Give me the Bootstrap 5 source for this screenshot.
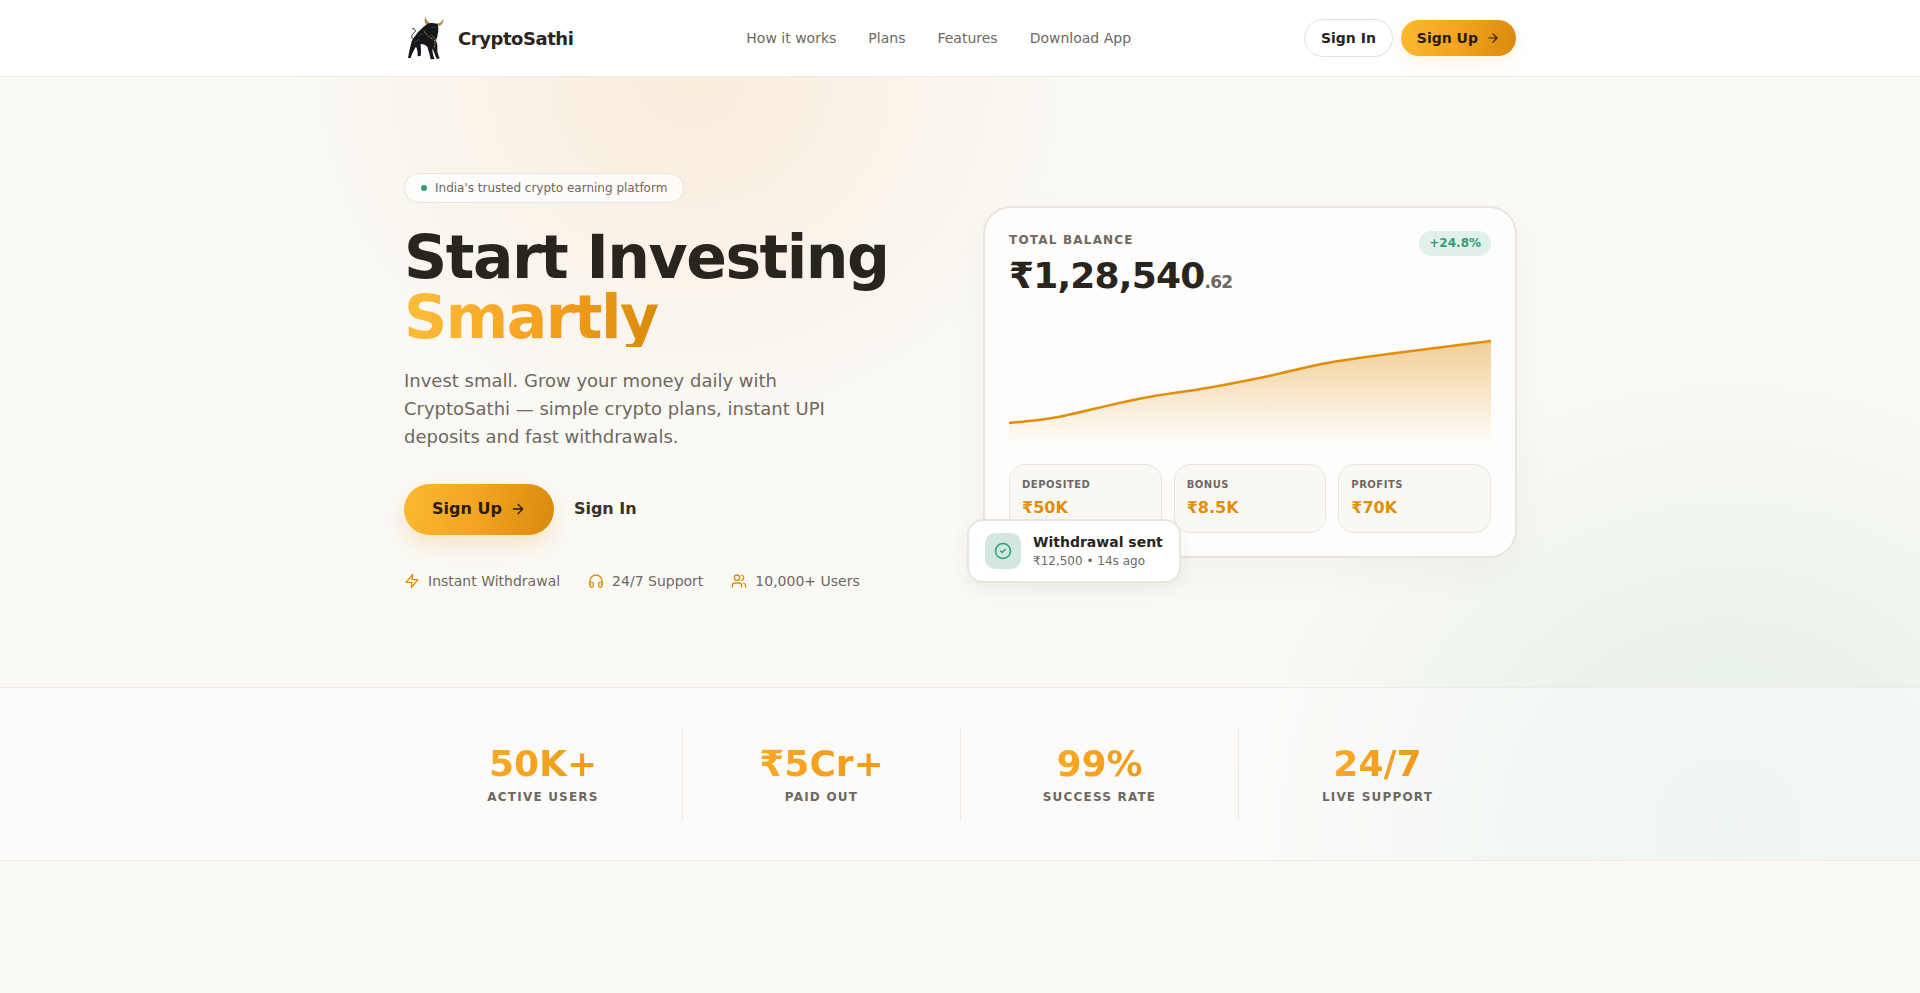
<!DOCTYPE html>
<html lang="en">
<head>
  <meta charset="UTF-8">
  <title>CryptoSathi</title>
  <link rel="stylesheet" href="https://cdn.jsdelivr.net/npm/bootstrap@5.3.0/dist/css/bootstrap.min.css">
  <style>
    body {
      font-family: "DejaVu Sans", sans-serif;
      color: #2a241e;
      min-height: 100vh;
      background-color: #faf9f5;
    }
    .wrap-main { width: 1112px; margin: 0 auto; }
    .top-bar { height: 77px; background: #fff; border-bottom: 1px solid #eeebe6; }
    .brand-link { gap: 10px; }
    .brand-name { font-size: 18px; font-weight: 700; letter-spacing: -.45px; color: #2a241e; }
    .top-links { gap: 32px; }
    .top-links a { font-size: 14px; color: #6e6860; text-decoration: none; }
    .btn-ghost {
      font-size: 14px; font-weight: 700; color: #2a241e; background: #fff;
      border: 1px solid #e4e1dc; border-radius: 50px; padding: 0 16px; height: 38px;
      display: inline-flex; align-items: center;
    }
    .btn-gold {
      font-size: 14px; font-weight: 700; color: #2a1c0a;
      background: linear-gradient(100deg, #fbb92f, #f2a322 50%, #d98a0a);
      border: 0; border-radius: 50px; padding: 0 16px; height: 36px;
      display: inline-flex; align-items: center; gap: 8px;
      box-shadow: 0 6px 16px rgba(245, 160, 32, .14);
    }
    .btn-gold.big { font-size: 16px; height: 51px; padding: 0 28px; box-shadow: 0 10px 22px rgba(245, 160, 32, .22); }
    .btn-plain { font-size: 16px; font-weight: 700; color: #38322c; background: none; border: 0; padding: 0 20px; }
    .page-glow {
      background-image:
        radial-gradient(ellipse 400px 370px at 690px 0, rgba(240, 170, 90, .17), rgba(240, 170, 90, .07) 55%, rgba(240, 170, 90, 0) 100%),
        radial-gradient(ellipse 500px 470px at 1728px 750px, rgba(47, 158, 120, .12), rgba(47, 158, 120, .06) 55%, rgba(47, 158, 120, 0) 100%);
      background-repeat: no-repeat;
    }
    .hero-grid { display: grid; grid-template-columns: 532px 534px; gap: 47px; align-items: center; padding: 96px 0 95px; }
    .trust-pill {
      display: inline-flex; align-items: center; gap: 8px; height: 30px; padding: 0 16px;
      font-size: 12px; color: #6e6860; background: rgba(255,255,255,.75);
      border: 1px solid #e9e6e0; border-radius: 50px;
    }
    .green-dot { width: 6px; height: 6px; border-radius: 50%; background: #2f9e78; }
    .hero-title { font-size: 60px; font-weight: 700; line-height: 60px; letter-spacing: -1.5px; margin: 23.5px 0 20px; color: #2a241e; }
    .gold-text {
      background: linear-gradient(100deg, #fdbf3a, #f5a020 55%, #d98a0a);
      -webkit-background-clip: text; background-clip: text; color: transparent;
      display: inline-block;
    }
    .hero-sub { font-size: 18px; line-height: 28px; color: #6e6860; max-width: 480px; margin-bottom: 33px; }
    .perk-row { gap: 28px; margin-top: 36px; font-size: 14px; color: #6e6860; }
    .perk-row svg { color: #e08e0b; }
    .bal-card {
      position: relative; background: #fefdfb; border: 2px solid #e8e5df; border-radius: 28px;
      padding: 23px 24px 24px; height: 352px; box-shadow: 0 16px 40px rgba(60, 45, 20, .04);
    }
    .bal-label { font-size: 12px; font-weight: 700; letter-spacing: 1.2px; color: #6e6860; }
    .bal-amount { font-size: 36px; font-weight: 700; line-height: 44px; letter-spacing: -.8px; margin-top: 5px; }
    .bal-amount small { font-size: 17px; color: #6e6860; }
    .up-pill { font-size: 12px; font-weight: 700; color: #2f9e78; background: #e2f0ea; border-radius: 50px; padding: 4px 10px; height: 25px; line-height: 17px; }
    .area-chart { display: block; width: 100%; height: 125px; margin-top: 15px; }
    .mini-grid { display: grid; grid-template-columns: repeat(3, 1fr); gap: 12px; margin-top: 20px; }
    .mini-box { background: #faf8f5; border: 1px solid #e9e6e0; border-radius: 16px; padding: 12px; height: 69px; }
    .mini-label { font-size: 10px; font-weight: 700; letter-spacing: .5px; color: #6e6860; line-height: 16px; }
    .mini-val { font-size: 16px; font-weight: 700; color: #e08e0b; line-height: 24px; margin-top: 3px; }
    .toast-float {
      position: absolute; left: -18px; bottom: -27px; width: 214px; height: 64px;
      display: flex; align-items: center; gap: 12px; padding: 0 16px;
      background: #fff; border: 2px solid #e8e5df; border-radius: 16px;
      box-shadow: 0 8px 20px rgba(60, 45, 20, .06);
    }
    .toast-icon { width: 36px; height: 36px; border-radius: 10px; background: #d2e8df; display: flex; align-items: center; justify-content: center; flex: none; }
    .toast-title { font-size: 14px; font-weight: 700; line-height: 18px; white-space: nowrap; color: #2a241e; }
    .toast-sub { font-size: 12px; color: #6e6860; line-height: 18px; margin-top: 1px; white-space: nowrap; }
    .stat-band { background: rgba(255,255,255,.42); border-top: 1px solid #eeebe6; border-bottom: 1px solid #eeebe6; padding: 40px 0; height: 174px; }
    .stat-grid { display: grid; grid-template-columns: repeat(4, 1fr); }
    .stat-cell { text-align: center; height: 92px; padding-top: 16px; border-left: 1px solid #eeebe6; }
    .stat-cell:first-child { border-left: 0; }
    .stat-num {
      font-size: 36px; font-weight: 700; line-height: 40px;
      background: linear-gradient(100deg, #f9a825, #ef9a1a);
      -webkit-background-clip: text; background-clip: text; color: transparent; display: inline-block;
    }
    .stat-label { font-size: 12px; font-weight: 700; letter-spacing: 1.2px; color: #6e6860; line-height: 18px; margin-top: 4px; }
  </style>
</head>
<body>

  <!-- Navigation -->
  <header class="top-bar">
    <div class="wrap-main h-100 d-flex align-items-center justify-content-between">
      <a class="d-flex align-items-center text-decoration-none brand-link" href="#">
        <svg width="44" height="48" viewBox="42 42 132 144" aria-hidden="true">
          <path d="M110 74C104 70 102 60 106 50 108 58 112 64 120 68ZM138 70C146 72 154 68 160 57 162 68 154 78 142 78Z" fill="#b0853f"/>
          <path d="M76 112C70 118 62 116 66 106 70 98 80 96 74 88 72 85 68 85 66 87" fill="none" stroke="#1a1c22" stroke-width="3"/>
          <path d="M112 72C118 68 132 68 142 72 146 80 146 92 143 102 142 110 141 118 136 120 140 126 143 132 142 142 141 152 143 162 149 175L140 177C136 166 132 156 128 146L127 150C128 160 130 170 134 177L122 178C120 166 116 154 112 140 106 134 98 132 92 132 92 142 94 156 92 168L83 169C84 158 82 148 78 140 72 148 66 160 62 174L54 174C56 160 60 146 63 132 65 120 72 112 78 104 86 94 98 82 112 72Z" fill="#15171d"/>
          <path d="M84 108C90 102 96 100 100 104M72 130C76 122 84 118 90 120M124 84C128 80 134 80 138 84" fill="none" stroke="#454b57" stroke-width="2"/>
          <path d="M102 92C108 104 118 112 130 118M125 106L142 122M134 120C136 130 134 138 132 146" fill="none" stroke="#b8923f" stroke-width="3" stroke-dasharray="3 1.5"/>
        </svg>
        <span class="brand-name">CryptoSathi</span>
      </a>
      <nav class="d-flex top-links">
        <a href="#">How it works</a>
        <a href="#">Plans</a>
        <a href="#">Features</a>
        <a href="#">Download App</a>
      </nav>
      <div class="d-flex align-items-center gap-2">
        <button class="btn-ghost">Sign In</button>
        <button class="btn-gold">Sign Up
          <svg width="14" height="14" viewBox="0 0 24 24" fill="none" stroke="currentColor" stroke-width="2" stroke-linecap="round" stroke-linejoin="round"><path d="M5 12h14M12 5l7 7-7 7"/></svg>
        </button>
      </div>
    </div>
  </header>

  <main class="page-glow">
    <section class="wrap-main hero-grid">
      <div>
        <span class="trust-pill"><span class="green-dot"></span>India's trusted crypto earning platform</span>
        <h1 class="hero-title">Start Investing<br><span class="gold-text">Smartly</span></h1>
        <p class="hero-sub">Invest small. Grow your money daily with CryptoSathi — simple crypto plans, instant UPI deposits and fast withdrawals.</p>
        <div class="d-flex align-items-center">
          <button class="btn-gold big">Sign Up
            <svg width="16" height="16" viewBox="0 0 24 24" fill="none" stroke="currentColor" stroke-width="2" stroke-linecap="round" stroke-linejoin="round"><path d="M5 12h14M12 5l7 7-7 7"/></svg>
          </button>
          <button class="btn-plain">Sign In</button>
        </div>
        <div class="d-flex perk-row">
          <span class="d-flex align-items-center gap-2">
            <svg width="16" height="16" viewBox="0 0 24 24" fill="none" stroke="currentColor" stroke-width="2" stroke-linecap="round" stroke-linejoin="round"><path d="M13 2 3 14h9l-1 8 10-12h-9l1-8z"/></svg>
            Instant Withdrawal
          </span>
          <span class="d-flex align-items-center gap-2">
            <svg width="16" height="16" viewBox="0 0 24 24" fill="none" stroke="currentColor" stroke-width="2" stroke-linecap="round" stroke-linejoin="round"><path d="M3 18v-6a9 9 0 0 1 18 0v6"/><path d="M21 19a2 2 0 0 1-2 2h-1a2 2 0 0 1-2-2v-3a2 2 0 0 1 2-2h3zM3 19a2 2 0 0 0 2 2h1a2 2 0 0 0 2-2v-3a2 2 0 0 0-2-2H3z"/></svg>
            24/7 Support
          </span>
          <span class="d-flex align-items-center gap-2">
            <svg width="16" height="16" viewBox="0 0 24 24" fill="none" stroke="currentColor" stroke-width="2" stroke-linecap="round" stroke-linejoin="round"><path d="M16 21v-2a4 4 0 0 0-4-4H6a4 4 0 0 0-4 4v2"/><circle cx="9" cy="7" r="4"/><path d="M22 21v-2a4 4 0 0 0-3-3.87M16 3.13a4 4 0 0 1 0 7.75"/></svg>
            10,000+ Users
          </span>
        </div>
      </div>

      <div class="bal-card">
        <div class="d-flex justify-content-between align-items-start">
          <div>
            <div class="bal-label">TOTAL BALANCE</div>
            <div class="bal-amount">₹1,28,540<small>.62</small></div>
          </div>
          <span class="up-pill">+24.8%</span>
        </div>
        <svg class="area-chart" viewBox="0 0 482 125" preserveAspectRatio="none" aria-hidden="true">
          <defs>
            <linearGradient id="areaFill" x1="0" y1="0" x2="0" y2="1">
              <stop offset="0" stop-color="#e08e0b" stop-opacity=".42"/>
              <stop offset="1" stop-color="#e08e0b" stop-opacity="0"/>
            </linearGradient>
          </defs>
          <path d="M0 104C16 102 27.5 102 49 98 70.5 94 104.2 84.8 129 80 153.8 75.2 176.2 72.8 198 69 219.8 65.2 240 61.2 260 57 280 52.8 296.8 47.8 318 44 339.2 40.2 359.7 37.7 387 34 414.3 30.3 450 26 482 22V125H0Z" fill="url(#areaFill)"/>
          <path d="M0 104C16 102 27.5 102 49 98 70.5 94 104.2 84.8 129 80 153.8 75.2 176.2 72.8 198 69 219.8 65.2 240 61.2 260 57 280 52.8 296.8 47.8 318 44 339.2 40.2 359.7 37.7 387 34 414.3 30.3 450 26 482 22" fill="none" stroke="#e08e0b" stroke-width="2.5"/>
        </svg>
        <div class="mini-grid">
          <div class="mini-box"><div class="mini-label">DEPOSITED</div><div class="mini-val">₹50K</div></div>
          <div class="mini-box"><div class="mini-label">BONUS</div><div class="mini-val">₹8.5K</div></div>
          <div class="mini-box"><div class="mini-label">PROFITS</div><div class="mini-val">₹70K</div></div>
        </div>
        <div class="toast-float">
          <div class="toast-icon">
            <svg width="18" height="18" viewBox="0 0 24 24" fill="none" stroke="#2f9e78" stroke-width="2" stroke-linecap="round" stroke-linejoin="round"><circle cx="12" cy="12" r="10"/><path d="m9 12 2 2 4-4"/></svg>
          </div>
          <div>
            <div class="toast-title">Withdrawal sent</div>
            <div class="toast-sub">₹12,500 • 14s ago</div>
          </div>
        </div>
      </div>
    </section>

    <section class="stat-band">
      <div class="wrap-main stat-grid">
        <div class="stat-cell"><div class="stat-num">50K+</div><div class="stat-label">ACTIVE USERS</div></div>
        <div class="stat-cell"><div class="stat-num">₹5Cr+</div><div class="stat-label">PAID OUT</div></div>
        <div class="stat-cell"><div class="stat-num">99%</div><div class="stat-label">SUCCESS RATE</div></div>
        <div class="stat-cell"><div class="stat-num">24/7</div><div class="stat-label">LIVE SUPPORT</div></div>
      </div>
    </section>
  </main>

  <script src="https://cdn.jsdelivr.net/npm/bootstrap@5.3.0/dist/js/bootstrap.bundle.min.js"></script>
</body>
</html>
